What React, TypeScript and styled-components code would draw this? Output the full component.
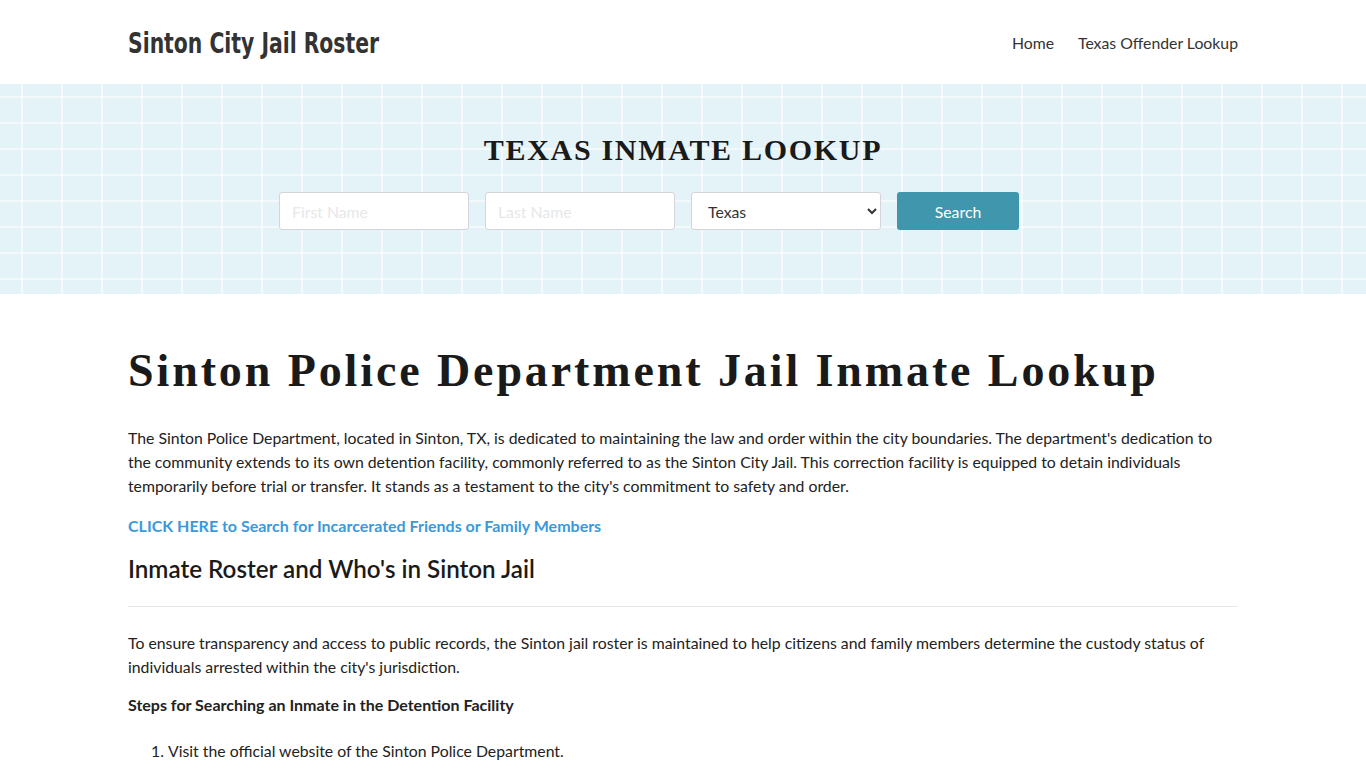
import React from "react";
import styled, { createGlobalStyle } from "styled-components";

const GlobalStyle = createGlobalStyle`
  body {
    margin: 0;
    font-family: Lato, "Liberation Sans", sans-serif;
    color: #222;
    background: #fff;
  }
  * { box-sizing: border-box; }
`;

export default function App() {
  return (
    <>
      <GlobalStyle />
      <Header>
        <Container>
          <HeaderRow>
            <Logo>Sinton City Jail Roster</Logo>
            <Nav>
              <NavLink href="#">Home</NavLink>
              <NavLink href="#">Texas Offender Lookup</NavLink>
            </Nav>
          </HeaderRow>
        </Container>
      </Header>

      <Banner>
        <BannerTitle>Texas Inmate Lookup</BannerTitle>
        <SearchForm>
          <Field placeholder="First Name" />
          <Field placeholder="Last Name" />
          <Select defaultValue="Texas">
            <option>Texas</option>
          </Select>
          <SearchButton type="button">Search</SearchButton>
        </SearchForm>
      </Banner>

      <Container>
        <Main>
          <PageTitle>Sinton Police Department Jail Inmate Lookup</PageTitle>
          <Para>
            The Sinton Police Department, located in Sinton, TX, is dedicated to maintaining the law and order within
            the city boundaries. The department's dedication to the community extends to its own detention facility,
            commonly referred to as the Sinton City Jail. This correction facility is equipped to detain individuals
            temporarily before trial or transfer. It stands as a testament to the city's commitment to safety and order.
          </Para>
          <BlueLink href="#">CLICK HERE to Search for Incarcerated Friends or Family Members</BlueLink>
          <SectionTitle>Inmate Roster and Who's in Sinton Jail</SectionTitle>
          <Rule />
          <Para>
            To ensure transparency and access to public records, the Sinton jail roster is maintained to help citizens
            and family members determine the custody status of individuals arrested within the city's jurisdiction.
          </Para>
          <StepsTitle>Steps for Searching an Inmate in the Detention Facility</StepsTitle>
          <Steps>
            <li>Visit the official website of the Sinton Police Department.</li>
          </Steps>
        </Main>
      </Container>
    </>
  );
}

const Container = styled.div`
  width: 1110px;
  margin: 0 auto;
`;

const Header = styled.header`
  height: 84px;
  background: #fff;
`;

const HeaderRow = styled.div`
  height: 84px;
  display: flex;
  align-items: center;
  justify-content: space-between;
`;

const Logo = styled.div`
  font-family: "DejaVu Sans", sans-serif;
  font-stretch: condensed;
  font-weight: 700;
  font-size: 29px;
  color: #333;
  transform: scaleX(0.78);
  transform-origin: left center;
  padding-top: 2px;
  white-space: nowrap;
`;

const Nav = styled.nav`
  display: flex;
  gap: 24px;
`;

const NavLink = styled.a`
  font-size: 15.8px;
  color: #333;
  text-decoration: none;
`;

const Banner = styled.section`
  height: 210px;
  background-color: #e4f3f8;
  background-image:
    linear-gradient(to right, rgba(255, 255, 255, 0.6) 2px, transparent 2px),
    linear-gradient(to bottom, rgba(255, 255, 255, 0.6) 2px, transparent 2px);
  background-size: 40px 26px;
  background-position: 21px 12px;
  display: flex;
  flex-direction: column;
  align-items: center;
  padding-top: 48px;
`;

const BannerTitle = styled.h2`
  margin: 0;
  font-family: "Liberation Serif", "DejaVu Serif", serif;
  font-weight: 700;
  font-size: 30px;
  letter-spacing: 1.7px;
  text-transform: uppercase;
  color: #1a1a1a;
  line-height: 36px;
`;

const SearchForm = styled.div`
  display: flex;
  gap: 16px;
  margin-top: 24px;
  margin-right: 68px;
`;

const Field = styled.input`
  width: 190px;
  height: 38px;
  border: 1px solid #d2d6da;
  border-radius: 3px;
  background: #fff;
  padding: 0 12px;
  font-family: Lato, sans-serif;
  font-size: 15.8px;
  color: #333;
  &::placeholder {
    color: #e6e8ea;
  }
`;

const Select = styled.select`
  width: 190px;
  height: 38px;
  border: 1px solid #d2d6da;
  border-radius: 3px;
  background: #fff;
  padding: 0 10px 0 12px;
  font-family: Lato, sans-serif;
  font-size: 15.8px;
  color: #333;
`;

const SearchButton = styled.button`
  width: 122px;
  height: 38px;
  border: none;
  border-radius: 3px;
  background: #4096ad;
  color: #fff;
  font-family: Lato, sans-serif;
  font-size: 15.8px;
`;

const Main = styled.main`
  padding-top: 49px;
`;

const PageTitle = styled.h1`
  margin: 0 0 27px;
  font-family: "Liberation Serif", "DejaVu Serif", serif;
  font-weight: 700;
  font-size: 46px;
  letter-spacing: 2.9px;
  line-height: 56px;
  color: #1a1a1a;
`;

const Para = styled.p`
  margin: 0 0 16px;
  font-size: 15.8px;
  line-height: 24px;
  color: #222;
`;

const StepsTitle = styled.p`
  margin: 0;
  font-size: 16px;
  font-weight: 700;
  line-height: 20px;
  color: #222;
`;

const BlueLink = styled.a`
  display: block;
  font-size: 16px;
  font-weight: 700;
  line-height: 24px;
  color: #3a9ad9;
  text-decoration: none;
`;

const SectionTitle = styled.h2`
  margin: 16px 0 0;
  font-size: 24.2px;
  font-weight: 600;
  line-height: 30px;
  color: #1a1a1a;
`;

const Rule = styled.hr`
  border: none;
  border-top: 1px solid #e8e8e8;
  margin: 22px 0 24px;
`;

const Steps = styled.ol`
  margin: 24px 0 0;
  padding-left: 40px;
  font-size: 15.8px;
  line-height: 24px;
  color: #222;
`;
